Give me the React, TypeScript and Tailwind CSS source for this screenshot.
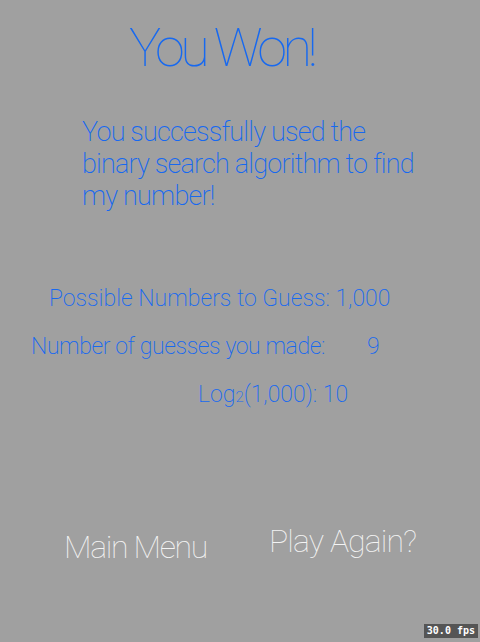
const blue = 'text-[#1769f0]';

const App = () => {
  return (
    <div className="relative w-[480px] h-[642px] overflow-hidden bg-[#a0a0a0] font-['Roboto',sans-serif] font-light">
      <div className={`pt-[21px] pl-[129px] text-[54px] leading-[54px] font-thin tracking-[-4.5px] whitespace-nowrap ${blue}`}>
        You Won!
      </div>

      <div className={`mt-[41px] pl-[82px] text-[27px] leading-[32px] font-[200] tracking-[-0.8px] whitespace-nowrap ${blue}`}>
        <div>You successfully used the</div>
        <div>binary search algorithm to find</div>
        <div>my number!</div>
      </div>

      <div className={`mt-[63px] text-[23px] leading-[48px] font-[200] whitespace-nowrap ${blue}`}>
        <div className="pl-[49px]">Possible Numbers to Guess: 1,000</div>
        <div className="flex pl-[31px]">
          <span className="tracking-[-0.4px] w-[336px]">Number of guesses you made:</span>
          <span>9</span>
        </div>
        <div className="pl-[198px]">
          Log<span className="text-[15px]">2</span>(1,000): 10
        </div>
      </div>

      <div className="mt-[104px] flex items-start text-[32px] leading-[32px] text-[#f4f4f4] font-thin whitespace-nowrap">
        <div className="ml-[64px] mt-[6px] tracking-[-1.3px]">Main Menu</div>
        <div className="ml-[62px] tracking-[-0.9px]">Play Again?</div>
      </div>

      <div className="absolute right-[2px] bottom-[4px] bg-[#555555] px-[3px] text-[10px] leading-[14px] font-bold text-white font-['DejaVu_Sans_Mono',monospace]">
        30.0 fps
      </div>
    </div>
  );
};

export default App;
